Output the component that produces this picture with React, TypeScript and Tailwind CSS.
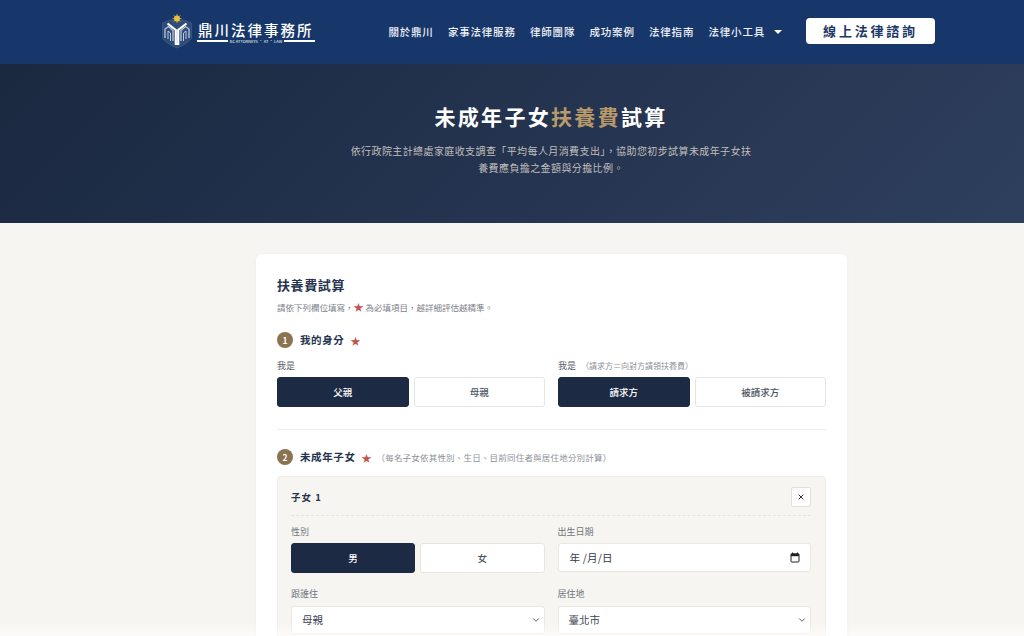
import { ChevronDown, X } from 'lucide-react';

const font = { fontFamily: '"Noto Sans CJK TC", "Noto Sans", sans-serif' };

const Star = () => <span className="text-[#c25450]">★</span>;

const navItems = ['關於鼎川', '家事法律服務', '律師團隊', '成功案例', '法律指南'];

const Logo = () => (
  <svg width="32" height="37" viewBox="0 0 32 37" fill="none">
    <path d="M1.5 9 L9 6 L23 6 L30.5 9 V23 C30.5 27 22 31.5 16 34 C10 31.5 1.5 27 1.5 23 Z" fill="#2f4c78" stroke="#46638e" strokeWidth="0.6" />
    <g stroke="#e5b93c" strokeWidth="0.8">
      <path d="M16 0 V9 M11.5 4.5 H20.5 M12.8 1.3 L19.2 7.7 M19.2 1.3 L12.8 7.7" />
    </g>
    <circle cx="16" cy="4.5" r="3" fill="#e9bf3f" />
    <path d="M6.5 9.5 L14.8 16 V30 H17.2 V16 L25.5 9.5" stroke="#ffffff" strokeWidth="2.2" />
    <path d="M4 24 V15 L7.5 12.5 L12 16.5 V27 M28 24 V15 L24.5 12.5 L20 16.5 V27" stroke="#b9c7da" strokeWidth="1.3" />
    <path d="M7 25 V17 L9.5 19 V27 M25 25 V17 L22.5 19 V27" stroke="#b9c7da" strokeWidth="1" />
  </svg>
);

const Choice = ({ label, active = false }: { label: string; active?: boolean }) => (
  <button
    className={`flex-1 h-[30px] rounded-[3px] border text-[9.5px] font-medium ${
      active ? 'bg-[#1c2a44] border-[#1c2a44] text-white' : 'bg-white border-[#e8e5df] text-[#4b5361]'
    }`}
  >
    {label}
  </button>
);

const Step = ({ n }: { n: number }) => (
  <span className="w-[16px] h-[16px] rounded-full bg-[#8b7350] text-white text-[8.5px] font-bold flex items-center justify-center">
    {n}
  </span>
);

const SelectField = ({ label, value }: { label: string; value: string }) => (
  <div>
    <div className="text-[9px] text-[#6f7680] mb-[6px] leading-[13px]">{label}</div>
    <div className="h-[28px] bg-white border border-[#ebe8e2] rounded-[3px] flex items-center justify-between pl-[10px] pr-[3px] text-[10.5px] text-[#3c4451]">
      {value}
      <ChevronDown className="w-[10px] h-[10px] text-[#444]" />
    </div>
  </div>
);

export default function App() {
  return (
    <div lang="zh-TW" className="h-screen overflow-hidden relative bg-[#f7f5f1]" style={font}>
      <header className="h-[64px] bg-[#17376a] flex items-center justify-between pl-[161px] pr-[89px]">
        <div className="flex items-center gap-[4px]">
          <Logo />
          <div className="w-[118px]">
            <div className="text-[14.5px] leading-[18px] font-medium tracking-[2px] text-white whitespace-nowrap pl-[1px]">鼎川法律事務所</div>
            <div className="flex items-center gap-[2px]">
              <span className="flex-1 h-[2px] bg-white" />
              <span className="text-[4px] leading-[4px] text-white whitespace-nowrap">BC ATTORNEYS · AT · LAW</span>
              <span className="flex-1 h-[2px] bg-white" />
            </div>
          </div>
        </div>
        <div className="flex items-center">
          <nav className="flex items-center gap-[14.3px] text-[10.5px] font-medium tracking-[0.8px] text-[#eef0f5] mr-[24px]">
            {navItems.map((item) => (
              <a key={item}>{item}</a>
            ))}
            <a className="flex items-center gap-[9px]">
              法律小工具
              <span className="w-0 h-0 border-x-[4px] border-x-transparent border-t-[4px] border-t-white" />
            </a>
          </nav>
          <button className="w-[129px] h-[26px] mb-[2px] bg-white rounded-[4px] text-[13px] font-bold tracking-[2.8px] text-[#1c3765]">
            線上法律諮詢
          </button>
        </div>
      </header>

      <section className="h-[159px] bg-[linear-gradient(135deg,#1a2840,#2e3f5e)] flex flex-col items-center pt-[37px] pl-[78px]">
        <h1 className="text-[21px] leading-[30px] font-bold tracking-[2.3px] text-white">
          未成年子女<span className="text-[#b89a6a]">扶養費</span>試算
        </h1>
        <p className="mt-[11px] text-center text-[10px] leading-[17px] tracking-[0.4px] text-[#c0bfbc]">
          依行政院主計總處家庭收支調查「平均每人月消費支出」，協助您初步試算未成年子女扶
          <br />
          養費應負擔之金額與分擔比例。
        </p>
      </section>

      <main className="flex justify-center pt-[31px] pl-[79px]">
        <div className="w-[591px] bg-white rounded-t-[6px] shadow-[0_1px_4px_rgba(0,0,0,0.04)] px-[21px] pt-[21px]">
          <h2 className="text-[13px] leading-[20px] font-bold tracking-[0.6px] text-[#26344f]">扶養費試算</h2>
          <p className="mt-[5px] text-[8.5px] leading-[14px] text-[#7b8088]">
            請依下列欄位填寫，<span className="text-[10px] mr-[2px]"><Star /></span>為必填項目，越詳細評估越精準。
          </p>

          <div className="mt-[18px] flex items-center gap-[7px] h-[16px]">
            <Step n={1} />
            <span className="text-[10.5px] font-bold tracking-[0.6px] text-[#26344f]">我的身分</span>
            <span className="text-[10px] ml-[-1px]"><Star /></span>
          </div>

          <div className="mt-[11px] grid grid-cols-2 gap-x-[13px]">
            <div>
              <div className="text-[9px] leading-[13px] text-[#5b626c] mb-[5px]">我是</div>
              <div className="flex gap-[5px]">
                <Choice label="父親" active />
                <Choice label="母親" />
              </div>
            </div>
            <div>
              <div className="text-[9px] leading-[13px] text-[#5b626c] mb-[5px]">
                我是 <span className="text-[8px] text-[#8c9098] ml-[3px]">（請求方＝向對方請領扶養費）</span>
              </div>
              <div className="flex gap-[5px]">
                <Choice label="請求方" active />
                <Choice label="被請求方" />
              </div>
            </div>
          </div>

          <div className="mt-[22px] h-px bg-[#efede8]" />

          <div className="mt-[19px] flex items-center gap-[7px] h-[16px]">
            <Step n={2} />
            <span className="text-[10.5px] font-bold tracking-[0.6px] text-[#26344f]">未成年子女</span>
            <span className="text-[10px] ml-[-1px]"><Star /></span>
            <span className="text-[8.5px] tracking-[0.2px] text-[#8c9098] ml-[-2px]">（每名子女依其性別、生日、目前同住者與居住地分別計算）</span>
          </div>

          <div className="mt-[11px] bg-[#f7f5f1] border border-[#f0ede7] rounded-[4px] pl-[13px] pr-[14px] pt-[10px] pb-[14px]">
            <div className="flex items-center justify-between pb-[8px] border-b border-dashed border-[#e6e3dd]">
              <span className="text-[9.5px] font-bold tracking-[1px] text-[#26344f]">子女 1</span>
              <button className="w-[20px] h-[20px] bg-white border border-[#e3e0da] rounded-[2px] flex items-center justify-center">
                <X className="w-[8px] h-[8px] text-[#333]" strokeWidth={3} />
              </button>
            </div>

            <div className="mt-[9px] grid grid-cols-2 gap-x-[13px] gap-y-[14px]">
              <div>
                <div className="text-[9px] leading-[13px] text-[#6f7680] mb-[5px]">性別</div>
                <div className="flex gap-[5px]">
                  <Choice label="男" active />
                  <Choice label="女" />
                </div>
              </div>
              <div>
                <div className="text-[9px] leading-[13px] text-[#6f7680] mb-[5px]">出生日期</div>
                <div className="h-[29px] bg-white border border-[#ebe8e2] rounded-[3px] flex items-center justify-between pl-[11px] pr-[10px] text-[10.5px] tracking-[0.2px] text-[#333a45]">
                  <span>年 /月/日</span>
                  <svg width="10" height="11" viewBox="0 0 10 11" fill="none">
                    <path d="M2.5 0.5 V2 M7.5 0.5 V2" stroke="#222" />
                    <rect x="1" y="1.8" width="8" height="8.2" rx="0.8" stroke="#222" />
                    <rect x="1" y="1.8" width="8" height="2.4" fill="#222" />
                  </svg>
                </div>
              </div>
              <SelectField label="跟誰住" value="母親" />
              <SelectField label="居住地" value="臺北市" />
            </div>
          </div>
        </div>
      </main>
      <div className="absolute inset-x-0 bottom-0 h-[14px] bg-gradient-to-t from-white/60 to-transparent" />
    </div>
  );
}
